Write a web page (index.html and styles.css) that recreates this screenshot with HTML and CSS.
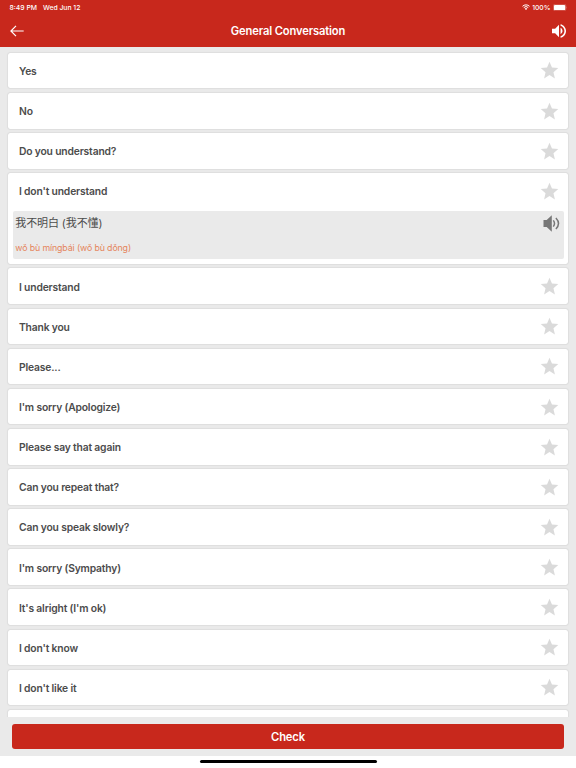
FILE: index.html
```
<!DOCTYPE html>
<html lang="en">
<head>
  <meta charset="utf-8">
  <title>General Conversation</title>
  <link rel="stylesheet" href="styles.css">
</head>
<body>
  <svg class="defs" width="0" height="0">
    <symbol id="star" viewBox="0 0 24 24">
      <path d="M12 17.27 18.18 21l-1.64-7.03L22 9.24l-7.19-.61L12 2 9.19 8.63 2 9.24l5.46 4.73L5.82 21z"/>
    </symbol>
  </svg>

  <header>
    <div class="status">
      <span class="time">8:49 PM</span>
      <span class="date">Wed Jun 12</span>
      <svg class="wifi" viewBox="0 0 16 12">
        <path d="M1 4.6a10 10 0 0 1 14 0M3.5 7.2a6.4 6.4 0 0 1 9 0" fill="none" stroke="#fff" stroke-width="2"/>
        <path d="M8 12 5.4 9.3a3.7 3.7 0 0 1 5.2 0z" fill="#fff"/>
      </svg>
      <span class="percent">100%</span>
      <svg class="battery" viewBox="0 0 14.5 7">
        <rect x=".25" y=".25" width="12.7" height="6.5" rx="1.8" fill="none" stroke="#e08a84" stroke-width=".5"/>
        <rect x=".9" y=".9" width="11.4" height="5.2" rx="1.2" fill="#fff"/>
        <path d="M13.5 2.5q.9.9 0 2z" fill="#e08a84"/>
      </svg>
    </div>
    <div class="navbar">
      <svg class="back" viewBox="0 0 14 12">
        <path d="M6 .8.9 6 6 11.2M.9 6h12.8" fill="none" stroke="#fff" stroke-width="1.2"/>
      </svg>
      <h1>General Conversation</h1>
      <svg class="volume" viewBox="3 3 18 18">
        <path fill="#fff" d="M3 9v6h4l5 5V4L7 9H3zm13.5 3c0-1.77-1.02-3.29-2.5-4.03v8.05c1.48-.73 2.5-2.25 2.5-4.02zM14 3.23v2.06c2.89.86 5 3.54 5 6.71s-2.11 5.85-5 6.71v2.06c4.01-.91 7-4.49 7-8.77s-2.99-7.86-7-8.77z"/>
      </svg>
    </div>
  </header>

  <main class="list">
    <div class="card"><div class="row">Yes<svg class="star"><use href="#star"/></svg></div></div>
    <div class="card"><div class="row">No<svg class="star"><use href="#star"/></svg></div></div>
    <div class="card"><div class="row">Do you understand?<svg class="star"><use href="#star"/></svg></div></div>
    <div class="card open">
      <div class="row">I don't understand<svg class="star"><use href="#star"/></svg></div>
      <div class="answer">
        <div>
          <p class="chinese" lang="zh">我不明白 (我不懂)</p>
          <p class="pinyin">wǒ bù míngbái (wǒ bù dǒng)</p>
        </div>
        <svg class="speak" viewBox="0 0 17 17">
          <path d="M.5 5h3.2L8.8.3v16.4L3.7 12H.5z" fill="#777"/>
          <path d="M10.3 5.4q2.4 3.1 0 6.2M12.9 3q5.2 5.5 0 11" fill="none" stroke="#777" stroke-width="1.5"/>
        </svg>
      </div>
    </div>
    <div class="card"><div class="row">I understand<svg class="star"><use href="#star"/></svg></div></div>
    <div class="card"><div class="row">Thank you<svg class="star"><use href="#star"/></svg></div></div>
    <div class="card"><div class="row">Please...<svg class="star"><use href="#star"/></svg></div></div>
    <div class="card"><div class="row">I'm sorry (Apologize)<svg class="star"><use href="#star"/></svg></div></div>
    <div class="card"><div class="row">Please say that again<svg class="star"><use href="#star"/></svg></div></div>
    <div class="card"><div class="row">Can you repeat that?<svg class="star"><use href="#star"/></svg></div></div>
    <div class="card"><div class="row">Can you speak slowly?<svg class="star"><use href="#star"/></svg></div></div>
    <div class="card"><div class="row">I'm sorry (Sympathy)<svg class="star"><use href="#star"/></svg></div></div>
    <div class="card"><div class="row">It's alright (I'm ok)<svg class="star"><use href="#star"/></svg></div></div>
    <div class="card"><div class="row">I don't know<svg class="star"><use href="#star"/></svg></div></div>
    <div class="card"><div class="row">I don't like it<svg class="star"><use href="#star"/></svg></div></div>
    <div class="card"><div class="row"></div></div>
  </main>

  <footer>
    <button class="check">Check</button>
  </footer>
  <div class="home-bar"></div>
</body>
</html>
```
FILE: styles.css
```
* {
  box-sizing: border-box;
}

body {
  margin: 0;
  height: 768px;
  display: flex;
  flex-direction: column;
  overflow: hidden;
  background-color: #fff;
  color: #4c4c4c;
  font-family: Inter, "Noto Sans CJK SC", sans-serif;
}

.defs {
  position: absolute;
}

header {
  height: 47.4px;
  flex: none;
  background-color: #c8281c;
  color: #fff;
}

.status {
  display: flex;
  align-items: center;
  height: 14px;
  padding: 0 8.5px 0 9.5px;
  font-size: 6.8px;
  font-weight: 500;
}

.date {
  margin-left: 6px;
}

.wifi {
  width: 8px;
  height: 6px;
  margin-left: auto;
}

.percent {
  margin: 0 2.5px;
}

.battery {
  width: 14.5px;
  height: 7px;
}

.navbar {
  display: flex;
  align-items: center;
  justify-content: space-between;
  height: 33px;
  padding: 0 10px;
}

.back {
  width: 14px;
  height: 12px;
}

h1 {
  margin: 0;
  font-size: 11.2px;
  font-weight: 600;
  letter-spacing: -0.14px;
}

.volume {
  width: 14px;
  height: 14px;
}

.list {
  height: 669.6px;
  flex: none;
  padding: 5.4px 8px 0 8.4px;
  overflow: hidden;
  background-color: #eaeaea;
}

.card {
  height: 35.63px;
  margin-bottom: 4.5px;
  border-radius: 2px;
  background-color: #fff;
  box-shadow: 0 0 1.5px rgba(0, 0, 0, 0.25);
}

.card.open {
  height: 90.8px;
}

.row {
  display: flex;
  align-items: center;
  justify-content: space-between;
  height: 35.63px;
  padding: 0.8px 8px 0 10.6px;
  font-size: 10.3px;
  font-weight: 600;
  letter-spacing: -0.16px;
}

.star {
  width: 21px;
  height: 21px;
  fill: #dadada;
}

.answer {
  display: flex;
  justify-content: space-between;
  height: 48px;
  margin: 2px 4.5px 0 4.3px;
  padding: 4px 4px 0 2.6px;
  border-radius: 2px;
  background-color: #eaeaea;
}

.answer p {
  margin: 0;
}

.chinese {
  padding-top: 1.1px;
  font-size: 11px;
  line-height: 15px;
  letter-spacing: -0.1px;
}

.pinyin {
  padding-top: 9.9px;
  color: #e5855c;
  font-size: 8.8px;
  line-height: 13px;
  letter-spacing: -0.12px;
}

.speak {
  width: 17px;
  height: 17px;
}

footer {
  height: 39px;
  flex: none;
  padding: 6.8px 12px 0;
  background-color: #eaeaea;
}

.check {
  display: block;
  width: 100%;
  height: 25.6px;
  padding: 0;
  border: none;
  border-radius: 3px;
  background-color: #c8281c;
  color: #fff;
  font-family: inherit;
  font-size: 11.2px;
  font-weight: 600;
  letter-spacing: -0.14px;
}

.home-bar {
  width: 177px;
  height: 3px;
  margin: 4px auto 0;
  border-radius: 2px;
  background-color: #000;
}
```
